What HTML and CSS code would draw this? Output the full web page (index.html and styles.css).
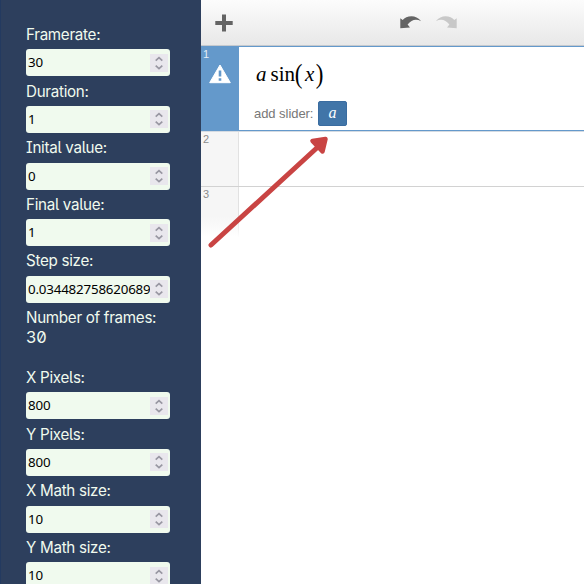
FILE: index.html
```
<!DOCTYPE html>
<html lang="en">
<head>
<meta charset="utf-8">
<title>Graph animator</title>
<link rel="stylesheet" href="styles.css">
</head>
<body>
<svg class="defs" width="0" height="0"><symbol id="spin" viewBox="0 0 18 18"><path d="M5.700 6.700 9 3.700l3.300 3M5.700 11.700 9 14.700l3.300-3" fill="none" stroke="#9897a2" stroke-width="1.700"/></symbol></svg>
<div class="app">
  <aside class="sidebar">
    <div class="field"><div class="label">Framerate:</div><div class="input"><span class="value">30</span><svg class="spin"><use href="#spin"/></svg></div></div>
    <div class="field"><div class="label">Duration:</div><div class="input"><span class="value">1</span><svg class="spin"><use href="#spin"/></svg></div></div>
    <div class="field"><div class="label">Inital value:</div><div class="input"><span class="value">0</span><svg class="spin"><use href="#spin"/></svg></div></div>
    <div class="field"><div class="label">Final value:</div><div class="input"><span class="value">1</span><svg class="spin"><use href="#spin"/></svg></div></div>
    <div class="field"><div class="label">Step size:</div><div class="input"><span class="value">0.034482758620689</span><svg class="spin"><use href="#spin"/></svg></div></div>
    <div class="frames"><div class="label">Number of frames:</div><div class="count">30</div></div>
    <div class="field"><div class="label">X Pixels:</div><div class="input"><span class="value">800</span><svg class="spin"><use href="#spin"/></svg></div></div>
    <div class="field"><div class="label">Y Pixels:</div><div class="input"><span class="value">800</span><svg class="spin"><use href="#spin"/></svg></div></div>
    <div class="field"><div class="label">X Math size:</div><div class="input"><span class="value">10</span><svg class="spin"><use href="#spin"/></svg></div></div>
    <div class="field"><div class="label">Y Math size:</div><div class="input"><span class="value">10</span><svg class="spin"><use href="#spin"/></svg></div></div>
  </aside>
  <main class="panel">
    <header class="toolbar">
      <svg class="plus" width="18" height="18" viewBox="0 0 18 18"><path d="M9 0.500v17M0.300 9h17.400" stroke="#646464" stroke-width="4"/></svg>
      <svg class="undo" width="22" height="13" viewBox="0 0 22 13"><path d="M0.300 2.200 2.700 4C6-.2 15.500-2.500 21.200 5.200 16 2.600 11.500 3.700 7.600 8.600L10 11.600 .3 12.300Z" fill="#646464"/></svg>
      <svg class="redo" width="22" height="13" viewBox="0 0 22 13"><path d="M21.700 2.200 19.300 4C16-.2 6.500-2.500.8 5.200 6 2.600 10.500 3.700 14.400 8.600L12 11.600 21.700 12.300Z" fill="#c8c8c8"/></svg>
    </header>
    <section class="row active">
      <div class="tab"><span class="num">1</span>
        <svg class="warn" width="22" height="20" viewBox="0 0 22 20"><path d="M11 1 21.300 18.700H.7Z" fill="#fff" stroke="#fff" stroke-width="1" stroke-linejoin="round"/><path d="M11 6.500v6M11 14.200v2.600" stroke="#6499cb" stroke-width="2.600"/></svg>
      </div>
      <div class="body">
        <div class="math"><i>a</i><span class="fn">sin</span><span class="paren">(</span><i class="x">x</i><span class="paren">)</span></div>
        <div class="slider"><span>add slider:</span><span class="btn">a</span></div>
      </div>
    </section>
    <section class="row second"><div class="tab"><span class="num">2</span></div></section>
    <section class="row third"><div class="tab"><span class="num">3</span></div></section>
  </main>
</div>
<svg class="pointer" width="130" height="120" viewBox="0 0 130 120"><path d="M6 115 115 15" stroke="#c94443" stroke-width="5" stroke-linecap="round"/><path d="M107.500 11 120.500 9 117.500 21.500Z" fill="#c94443" stroke="#c94443" stroke-width="4.500" stroke-linejoin="round"/></svg>
</body>
</html>
```
FILE: styles.css
```
* { box-sizing: border-box; }
body { margin: 0; width: 584px; height: 584px; overflow: hidden; background: #fff; font-family: "Liberation Sans", sans-serif; }
.defs { position: absolute; }
.app { display: flex; width: 584px; height: 584px; }

.sidebar { width: 201px; height: 584px; flex: none; padding: 20px 0 0 25px; background: #2d3f5d; border-left: 1px solid #233a60; overflow: hidden; }
.field { height: 56.600px; }
.label { height: 29.400px; line-height: 29px; font-family: Inter, sans-serif; font-size: 15.200px; letter-spacing: -0.300px; color: #f0faee; white-space: nowrap; font-feature-settings: "cv05", "cv08", "zero"; }
.input { display: flex; align-items: center; width: 144px; height: 27px; padding: 0 2px; border-radius: 3px; background: #f0faee; }
.value { flex: 1; min-width: 0; overflow: hidden; white-space: nowrap; font: 13.333px/27px "Noto Sans", sans-serif; letter-spacing: -0.180px; color: #000; }
.spin { flex: none; width: 18px; height: 18px; background: #e9e7ed; }
.frames { height: 60px; }
.count { height: 10px; line-height: 10px; font-family: Inter, sans-serif; font-size: 16.500px; color: #f0faee; font-feature-settings: "zero"; }

.panel { flex: 1; min-width: 0; }
.toolbar { display: flex; height: 46px; border-bottom: 1px solid #c5c9ce; background: linear-gradient(#fcfcfc, #e8e8e8); }
.plus { margin: 14px 0 0 14px; }
.undo { margin: 16px 0 0 167px; }
.redo { margin: 16px 0 0 13px; }

.row { display: flex; }
.tab { width: 38px; flex: none; background: #f6f6f6; border-right: 1px solid #e2e2e2; padding: 1px 0 0 2px; color: #8c8c8c; }
.num { display: block; font-size: 11px; line-height: 12px; }
.active { height: 85px; border-top: 1px solid #6499cb; border-bottom: 1px solid #6499cb; }
.active .tab { background: #6499cb; border: 0; padding-top: 1px; color: #e5eef7; }
.warn { display: block; margin: 4px 0 0 6px; }
.second { height: 56px; border-top: 1px solid #d5dbe2; border-bottom: 1px solid #d2d2d2; }
.third { height: 50px; }
.third .tab { background: linear-gradient(#f6f6f6 60%, #fff); border-image: linear-gradient(#e2e2e2 60%, #fff) 1; }

.body { padding: 15px 0 0 17px; }
.math { display: flex; height: 25px; line-height: 25px; font-family: "Liberation Serif", serif; font-size: 21px; color: #000; }
.fn { margin-left: 4px; }
.paren { display: inline-block; transform: scale(1.100, 1.250); }
.x { margin: 0 1.500px 0 3px; }
.slider { display: flex; align-items: center; margin: 13.500px 0 0 -2px; font-size: 13px; letter-spacing: -0.050px; color: #777; }
.btn { width: 29px; height: 25px; margin-left: 4.500px; border: 1px solid #3a6ca0; border-radius: 2px; background: #4175a8; color: #fff; font: italic 16px/21px "Liberation Serif", serif; text-align: center; }

.pointer { position: absolute; left: 205px; top: 130px; }
```
